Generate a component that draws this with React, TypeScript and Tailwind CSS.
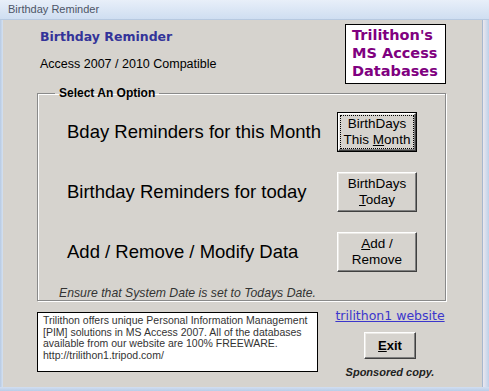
import React from "react";

const LIB = "font-['Liberation_Sans',Arial,sans-serif]";
const DEJA = "font-['DejaVu_Sans',Verdana,sans-serif]";

function ClassicButton({
  children,
  isDefault,
  className,
  textClass,
}: {
  children: React.ReactNode;
  isDefault?: boolean;
  className: string;
  textClass: string;
}) {
  const face = (
    <div className="w-full h-full flex border border-t-white border-l-white border-r-[#404040] border-b-[#404040] shadow-[inset_-1px_-1px_0_#808080,inset_1px_1px_0_#ebe9e5] bg-[#d6d3ce]">
      <div
        className={`flex-1 m-[1px] flex flex-col items-center justify-center text-center ${
          isDefault ? "border border-dotted border-black" : "border border-transparent"
        } ${textClass}`}
      >
        {children}
      </div>
    </div>
  );
  return isDefault ? (
    <div className={`border border-black flex ${className}`}>{face}</div>
  ) : (
    <div className={`flex ${className}`}>{face}</div>
  );
}

function OptionRow({ label, children }: { label: string; children: React.ReactNode }) {
  return (
    <div className="h-[40px] flex items-center justify-between">
      <span className={`${LIB} text-[18.5px] leading-[22px] text-black whitespace-nowrap`}>{label}</span>
      {children}
    </div>
  );
}

export default function App() {
  const btnText = `${LIB} text-[13.5px] leading-[16px] text-black`;
  return (
    <div className="w-[489px] h-[391px] flex flex-col bg-[#d6d3ce] overflow-hidden">
      {/* Title bar */}
      <div
        className={`h-[20px] shrink-0 flex items-center pl-[8px] bg-gradient-to-b from-[#e8eff9] to-[#cfdef1] border-b border-[#b7c9e0] text-[11px] text-[#4d5566] ${LIB}`}
      >
        Birthday Reminder
      </div>

      <div className="flex flex-1 min-h-0">
        <div className="w-[3px] shrink-0 bg-gradient-to-r from-[#b7cae3] to-[#d5e1f1]" />

        {/* Content */}
        <div className="flex-1 flex flex-col">
          {/* Top row */}
          <div className="flex justify-between pl-[37px] pr-[36px]">
            <div className="pt-[9px] flex flex-col">
              <div className={`${DEJA} font-bold text-[12.5px] leading-[16px] text-[#333399] whitespace-nowrap`}>
                Birthday Reminder
              </div>
              <div className={`${LIB} mt-[11px] text-[12.5px] leading-[16px] text-black whitespace-nowrap`}>
                Access 2007 / 2010 Compatible
              </div>
            </div>
            <div
              className={`mt-[4px] w-[101px] h-[60px] bg-white border border-black pl-[6px] pt-[1px] ${DEJA} font-bold text-[14.5px] leading-[18px] text-[#800080] whitespace-nowrap`}
            >
              Trilithon's
              <br />
              MS Access
              <br />
              Databases
            </div>
          </div>

          {/* Group box */}
          <fieldset className="mt-[2px] ml-[34px] w-[409px] border border-[#8a8a8a] shadow-[inset_1px_1px_0_#fff,1px_1px_0_#fff] px-[17px] pt-[12px] pb-0">
            <legend className={`${LIB} font-bold text-[12px] leading-[14px] text-black px-[4px]`}>
              Select An Option
            </legend>
            <div className="pl-[12px] pr-[11px] flex flex-col gap-[20px]">
              <OptionRow label="Bday Reminders for this Month">
                <ClassicButton isDefault className="w-[80px] h-[40px]" textClass={btnText}>
                  <span>BirthDays</span>
                  <span>
                    This <span className="underline">M</span>onth
                  </span>
                </ClassicButton>
              </OptionRow>
              <OptionRow label="Birthday Reminders for today">
                <ClassicButton className="w-[80px] h-[40px]" textClass={btnText}>
                  <span>BirthDays</span>
                  <span>
                    <span className="underline">T</span>oday
                  </span>
                </ClassicButton>
              </OptionRow>
              <OptionRow label="Add / Remove / Modify Data">
                <ClassicButton className="w-[80px] h-[40px]" textClass={btnText}>
                  <span>
                    <span className="underline">A</span>dd /
                  </span>
                  <span>Remove</span>
                </ClassicButton>
              </OptionRow>
            </div>
            <div className={`${LIB} italic mt-[14px] pl-[4px] text-[12.25px] leading-[14px] text-[#333333] whitespace-nowrap`}>
              Ensure that System Date is set to Todays Date.
            </div>
          </fieldset>

          {/* Bottom row */}
          <div className="mt-[7px] pl-[34px] flex items-start">
            <div
              className={`mt-[4px] w-[281px] h-[60px] bg-white border border-black pl-[5px] pt-[2px] ${LIB} text-[10.5px] leading-[11.7px] text-[#333333] whitespace-nowrap`}
            >
              Trilithon offers unique Personal Information Management
              <br />
              [PIM] solutions in MS Access 2007. All of the databases
              <br />
              available from our website are 100% FREEWARE.
              <br />
              http://trilithon1.tripod.com/
            </div>
            <div className="ml-[12px] w-[120px] flex flex-col items-center">
              <span className={`${DEJA} text-[12.5px] leading-[16px] text-[#3b36cc] underline whitespace-nowrap`}>
                trilithon1 website
              </span>
              <ClassicButton className="mt-[8px] w-[52px] h-[27px]" textClass={`${LIB} font-bold text-[13px] leading-[16px] text-black`}>
                <span>
                  <span className="underline">E</span>xit
                </span>
              </ClassicButton>
              <span className={`${LIB} mt-[6px] italic font-bold text-[11px] leading-[14px] text-[#222222] whitespace-nowrap`}>
                Sponsored copy.
              </span>
            </div>
          </div>
        </div>

        <div className="w-[7px] shrink-0 border-l border-[#a7b8cf] bg-gradient-to-r from-[#ece7ee] to-[#bdd0e9]" />
      </div>
      <div className="h-[4px] shrink-0 bg-gradient-to-b from-[#d2def0] to-[#b9cde8]" />
    </div>
  );
}
